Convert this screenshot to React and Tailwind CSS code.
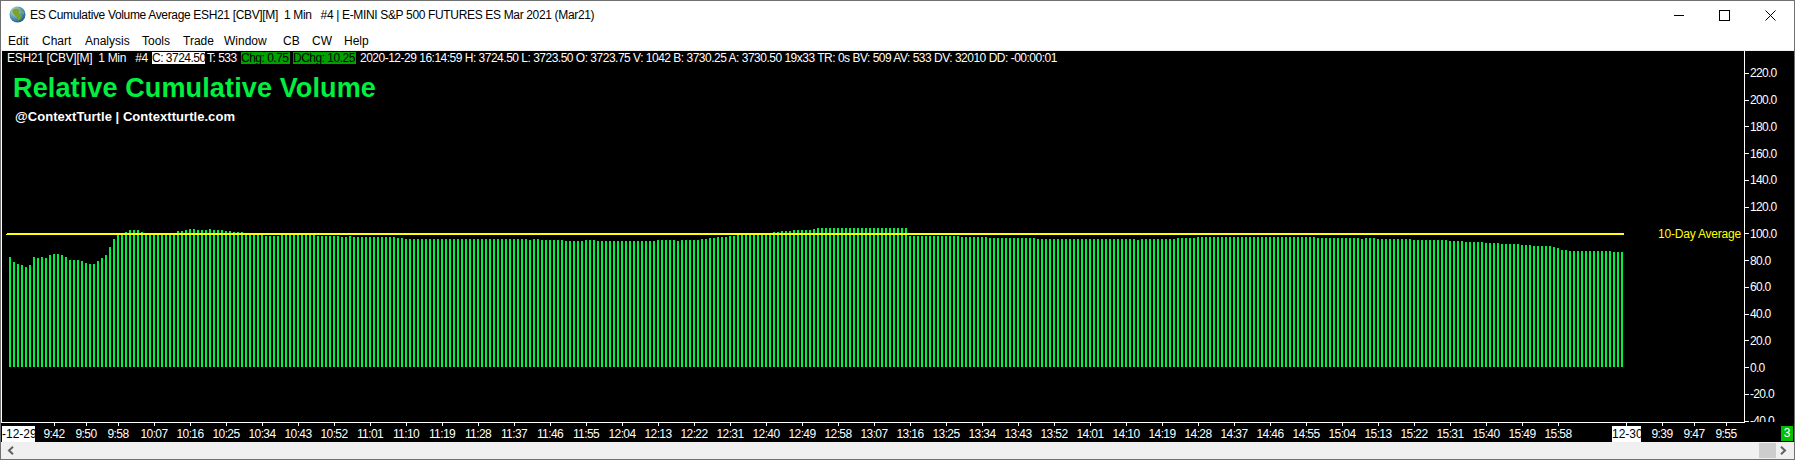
const FONT = "font-['Liberation_Sans',Arial,sans-serif]";

const RUNS = [
  [29,29,232],[30,32,230],[33,33,232],[34,41,234],[42,43,231],[44,44,230],[45,46,229],[47,49,230],[50,50,229],
  [51,53,230],[54,55,231],[56,58,232],[59,63,234],[64,67,236],[68,76,235],[77,82,236],[83,84,237],[85,85,236],
  [86,96,237],[97,98,238],[99,129,239],[130,130,240],[131,132,239],[133,138,240],[139,143,241],[144,146,240],
  [147,161,241],[162,166,240],[167,167,241],[168,172,240],[173,174,239],[175,176,238],[177,179,237],[180,181,236],
  [182,190,235],[191,192,232],[193,195,231],[196,200,230],[201,201,229],[202,224,228],[225,237,236],[238,244,237],
  [245,256,238],[257,281,239],[282,282,240],[283,291,239],[292,296,238],[297,326,237],[327,337,238],[338,338,239],
  [339,341,238],[342,350,239],[351,359,240],[360,363,241],[364,368,242],[369,372,243],[373,377,244],[378,380,245],
  [381,385,246],[386,386,247],[387,387,248],[388,389,250],[390,400,251],[401,403,252],
];
const HEAD = [257,262,264,265,267,265,257,258,257,258,255,254,254,255,257,260,260,260,261,263,264,264,261,258,255,247,239,235,234];
const TOPS = [...HEAD];
RUNS.forEach(([a, b, t]) => { for (let i = a; i <= b; i++) TOPS[i] = t; });
const barsPath = TOPS.map((t, i) => `M${9 + 4 * i} ${t}h2V367h-2z`).join("");

const Y_LABELS = ["220.0","200.0","180.0","160.0","140.0","120.0","100.0","80.0","60.0","40.0","20.0","0.0","-20.0","-40.0"];
const TIMES = ["10:07","10:16","10:25","10:34","10:43","10:52","11:01","11:10","11:19","11:28","11:37","11:46","11:55","12:04","12:13","12:22","12:31","12:40","12:49","12:58","13:07","13:16","13:25","13:34","13:43","13:52","14:01","14:10","14:19","14:28","14:37","14:46","14:55","15:04","15:13","15:22","15:31","15:40","15:49","15:58"];
const MENU = [["Edit","w-[34px]"],["Chart","w-[43px]"],["Analysis","w-[57px]"],["Tools","w-[41px]"],["Trade","w-[41px]"],["Window","w-[59px]"],["CB","w-[29px]"],["CW","w-[32px]"],["Help","w-[40px]"]];

function Globe() {
  return (
    <svg width="17" height="17" viewBox="0 0 16 16" className="shrink-0">
      <defs>
        <radialGradient id="g" cx="35%" cy="30%" r="75%">
          <stop offset="0%" stopColor="#e4f2f4" />
          <stop offset="40%" stopColor="#6fb0c4" />
          <stop offset="100%" stopColor="#1d5a86" />
        </radialGradient>
      </defs>
      <circle cx="8" cy="8" r="7.5" fill="url(#g)" />
      <path d="M3.500 3.500c2-1.800 5-1.300 6.300.3.700 1-.5 1.800-.2 3 .3 1.400 2 1.200 2.200 2.600.2 1.600-1.300 3.800-2.800 4-1 .1-.8-1.800-1.300-2.800-.5-1.100-2.500-1-3.100-2.500C3.400 7 2.500 5 3.500 3.500z" fill="#7ea32a" />
      <path d="M12.500 4c.9.7 1.700 2.200 1.500 3.700-.9-.3-2-1.600-1.500-3.700z" fill="#93ad36" />
    </svg>
  );
}

function Cell({ children, w }) {
  return (
    <div className={`${w} flex flex-col items-center shrink-0`}>
      <div className="w-px h-[3px] bg-white" />
      <div className="h-[16px] leading-[16px] whitespace-nowrap text-white tracking-[-0.6px]">{children}</div>
    </div>
  );
}

export default function App() {
  return (
    <div className={`${FONT} w-[1795px] h-[460px] flex flex-col bg-[#f0f0f0] border border-[#707070] overflow-hidden text-[12px] text-black`}>
      {/* title bar */}
      <div className="h-[26px] bg-white flex items-center shrink-0">
        <div className="ml-[8px] mr-[4px] mt-[1px]"><Globe /></div>
        <div className="whitespace-pre mt-[2px] tracking-[-0.34px]">ES Cumulative Volume Average ESH21 [CBV][M]  1 Min   #4 | E-MINI S&amp;P 500 FUTURES ES Mar 2021 (Mar21)</div>
        <div className="ml-auto flex items-center mt-[2px]">
          <div className="w-[46px] flex justify-center">
            <svg width="10" height="10" viewBox="0 0 10 10"><path d="M0 5.500H10" stroke="#000" /></svg>
          </div>
          <div className="w-[45px] flex justify-center">
            <svg width="11" height="11" viewBox="0 0 11 11"><rect x=".5" y=".5" width="10" height="10" fill="none" stroke="#000" /></svg>
          </div>
          <div className="w-[47px] flex justify-center">
            <svg width="11" height="11" viewBox="0 0 11 11"><path d="M.5.5l10 10M10.500.5l-10 10" stroke="#000" fill="none" /></svg>
          </div>
        </div>
      </div>
      {/* menu */}
      <div className="h-[23px] bg-white flex items-center pl-[7px] pt-[4px] shrink-0">
        {MENU.map(([m, w]) => <div key={m} className={w}>{m}</div>)}
      </div>
      <div className="h-px bg-[#f0f0f0] shrink-0" />

      {/* chart */}
      <div className="h-[372px] flex bg-black shrink-0">
        <div className="relative w-[1744px] h-[372px] border-l border-b border-r border-white shrink-0 overflow-hidden">
          <svg className="absolute left-0 top-0" width="1742" height="371" viewBox="2 51 1742 371" shapeRendering="crispEdges">
            <path d={barsPath} fill="#00f040" />
            <rect x="7" y="233" width="1617" height="2" fill="#ffff00" />
            <rect x="6" y="234" width="1" height="1" fill="#ffff00" />
          </svg>
          <div className="relative flex h-[12px] mt-[1px] text-white whitespace-pre leading-[12px] tracking-[-0.5px]">
            <div className="w-[150px] pl-[5px] shrink-0 tracking-[-0.3px]">ESH21 [CBV][M]  1 Min   #4</div>
            <div className="w-[53px] bg-white text-black shrink-0">C: 3724.50</div>
            <div className="w-[36px] pl-[2px] shrink-0">T: 533</div>
            <div className="w-[49px] bg-[#00a000] text-black shrink-0">Chg: 0.75</div>
            <div className="w-[63px] ml-[3px] bg-[#00a000] text-black shrink-0">DChg: 10.25</div>
            <div className="ml-[4px]">2020-12-29 16:14:59 H: 3724.50 L: 3723.50 O: 3723.75 V: 1042 B: 3730.25 A: 3730.50 19x33 TR: 0s BV: 509 AV: 533 DV: 32010 DD: -00:00:01</div>
          </div>
          <div className="relative ml-[11px] mt-[9px] text-[27px] leading-[31px] font-bold text-[#00f040] whitespace-nowrap tracking-[0.13px]">Relative Cumulative Volume</div>
          <div className="relative ml-[13px] mt-[5px] text-[13px] leading-[16px] font-bold text-white whitespace-nowrap tracking-[0.05px]">@ContextTurtle | Contextturtle.com</div>
          <div className="absolute left-[1656px] top-[176px] h-[14px] leading-[14px] text-[#ffff00] whitespace-nowrap tracking-[-0.2px]">10-Day Average</div>
        </div>
        <div className="flex-1 h-[371px] overflow-hidden pt-[9px] text-white tracking-[-0.7px]">
          {Y_LABELS.map((l) => (
            <div key={l} className="h-[26.75px] flex items-center whitespace-nowrap leading-[14px]">
              <div className="w-[4px] h-px bg-white mr-[1px] shrink-0" />
              <div>{l}</div>
            </div>
          ))}
        </div>
      </div>

      {/* time axis */}
      <div className="relative h-[19px] bg-black flex text-white pl-[1px] shrink-0">
        <div className="w-[33px] h-[16px] mt-[3px] bg-white text-black text-center leading-[16px] overflow-hidden whitespace-nowrap shrink-0">-12-29</div>
        <div className="w-[3px] shrink-0" />
        <Cell w="w-[32px]">9:42</Cell>
        <Cell w="w-[32px]">9:50</Cell>
        <Cell w="w-[32px]">9:58</Cell>
        <div className="w-[2px] shrink-0" />
        {TIMES.map((t) => <Cell key={t} w="w-[36px]">{t}</Cell>)}
        <div className="w-[36px] shrink-0" />
        <div className="w-[29px] flex flex-col items-center shrink-0">
          <div className="w-px h-[3px] bg-white" />
          <div className="w-full h-[16px] leading-[16px] bg-white text-black text-center overflow-hidden whitespace-nowrap">12-30</div>
        </div>
        <div className="w-[5px] shrink-0" />
        <Cell w="w-[32px]">9:39</Cell>
        <Cell w="w-[32px]">9:47</Cell>
        <Cell w="w-[32px]">9:55</Cell>
        <div className="w-[39px] shrink-0" />
        <div className="w-[12px] h-[15px] mt-[3px] bg-[#00c000] text-white text-center leading-[15px] shrink-0">3</div>
      </div>

      {/* scrollbar */}
      <div className="h-[17px] flex items-center bg-[#f0f0f0] shrink-0">
        <svg className="ml-[6px]" width="7" height="9" viewBox="0 0 7 9"><path d="M6 .8L2 4.500l4 3.700" fill="none" stroke="#606060" strokeWidth="2" /></svg>
        <div className="ml-auto w-[17px] h-[15px] bg-[#cdcdcd]" />
        <svg className="ml-[4px] mr-[7px]" width="7" height="9" viewBox="0 0 7 9"><path d="M1 .8l4 3.700-4 3.700" fill="none" stroke="#606060" strokeWidth="2" /></svg>
      </div>
    </div>
  );
}
